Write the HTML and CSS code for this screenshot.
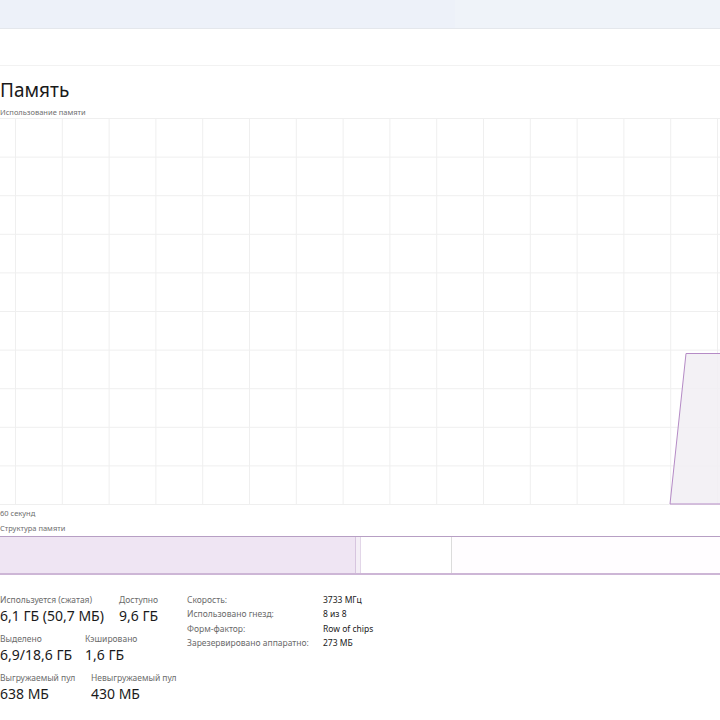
FILE: index.html
```html
<!DOCTYPE html>
<html lang="ru">
<head>
<meta charset="utf-8">
<link rel="stylesheet" href="styles.css">
</head>
<body>
<div class="topbar"><div class="topbar-right"></div></div>
<div class="toolbar"></div>
<main class="panel">
  <h1 class="title">Память</h1>
  <div class="caption caption-usage">Использование памяти</div>
  <svg class="graph" width="720" height="388" viewBox="0 0 720 388">
    <g stroke="#efefef" stroke-width="1">
      <line x1="0" y1="0.5" x2="720" y2="0.5"/>
      <line x1="0" y1="39.1" x2="720" y2="39.1"/>
      <line x1="0" y1="77.7" x2="720" y2="77.7"/>
      <line x1="0" y1="116.3" x2="720" y2="116.3"/>
      <line x1="0" y1="154.9" x2="720" y2="154.9"/>
      <line x1="0" y1="193.5" x2="720" y2="193.5"/>
      <line x1="0" y1="232.1" x2="720" y2="232.1"/>
      <line x1="0" y1="270.7" x2="720" y2="270.7"/>
      <line x1="0" y1="309.3" x2="720" y2="309.3"/>
      <line x1="0" y1="347.9" x2="720" y2="347.9"/>
      <line x1="0" y1="386.5" x2="720" y2="386.5"/>
      <line x1="15.5" y1="0" x2="15.5" y2="387"/>
      <line x1="62.3" y1="0" x2="62.3" y2="387"/>
      <line x1="109.1" y1="0" x2="109.1" y2="387"/>
      <line x1="155.9" y1="0" x2="155.9" y2="387"/>
      <line x1="202.7" y1="0" x2="202.7" y2="387"/>
      <line x1="249.5" y1="0" x2="249.5" y2="387"/>
      <line x1="296.3" y1="0" x2="296.3" y2="387"/>
      <line x1="343.1" y1="0" x2="343.1" y2="387"/>
      <line x1="389.9" y1="0" x2="389.9" y2="387"/>
      <line x1="436.7" y1="0" x2="436.7" y2="387"/>
      <line x1="483.5" y1="0" x2="483.5" y2="387"/>
      <line x1="530.3" y1="0" x2="530.3" y2="387"/>
      <line x1="577.1" y1="0" x2="577.1" y2="387"/>
      <line x1="623.9" y1="0" x2="623.9" y2="387"/>
      <line x1="670.7" y1="0" x2="670.7" y2="387"/>
      <line x1="717.5" y1="0" x2="717.5" y2="387"/>
    </g>
    <polygon points="670,386 686,235.5 724,235.5 724,386" fill="#f1eef3" fill-opacity="0.85" stroke="#b58bc6" stroke-width="1"/>
  </svg>
  <div class="caption caption-time">60 секунд</div>
  <div class="caption caption-struct">Структура памяти</div>
  <div class="composition">
    <div class="seg seg-used"></div>
    <div class="seg seg-modified"></div>
    <div class="seg seg-standby"></div>
    <div class="seg seg-free"></div>
  </div>
  <section class="stats">
    <div class="stats-left">
      <div class="stat-row">
        <div class="stat stat-used">
          <div class="stat-label">Используется (сжатая)</div>
          <div class="stat-value">6,1 ГБ (50,7 МБ)</div>
        </div>
        <div class="stat">
          <div class="stat-label">Доступно</div>
          <div class="stat-value">9,6 ГБ</div>
        </div>
      </div>
      <div class="stat-row">
        <div class="stat stat-committed">
          <div class="stat-label">Выделено</div>
          <div class="stat-value">6,9/18,6 ГБ</div>
        </div>
        <div class="stat">
          <div class="stat-label">Кэшировано</div>
          <div class="stat-value">1,6 ГБ</div>
        </div>
      </div>
      <div class="stat-row">
        <div class="stat stat-paged">
          <div class="stat-label">Выгружаемый пул</div>
          <div class="stat-value">638 МБ</div>
        </div>
        <div class="stat">
          <div class="stat-label">Невыгружаемый пул</div>
          <div class="stat-value">430 МБ</div>
        </div>
      </div>
    </div>
    <dl class="props">
      <dt>Скорость:</dt><dd>3733 МГц</dd>
      <dt>Использовано гнезд:</dt><dd>8 из 8</dd>
      <dt>Форм-фактор:</dt><dd>Row of chips</dd>
      <dt>Зарезервировано аппаратно:</dt><dd>273 МБ</dd>
    </dl>
  </section>
</main>
</body>
</html>
```
FILE: styles.css
```css
html, body {
  margin: 0;
  padding: 0;
  background: #ffffff;
  overflow: hidden;
}
body {
  width: 720px;
  height: 720px;
  font-family: "Noto Sans", "Open Sans", "DejaVu Sans", sans-serif;
  color: #1a1a1a;
}
.topbar {
  height: 28px;
  background: #edf1f9;
  border-bottom: 1px solid #e4e7ec;
  display: flex;
  justify-content: flex-end;
}
.topbar-right {
  width: 265px;
  background: #eff3f9;
}
.toolbar {
  height: 36px;
  border-bottom: 1px solid #f2f2f2;
}
.panel {
  width: 720px;
}
.title {
  margin: 12px 0 0 0;
  font-size: 19px;
  line-height: 24px;
  font-weight: 400;
  color: #1a1a1a;
}
.caption {
  font-size: 7.5px;
  line-height: 10px;
  color: #6e6e6e;
}
.caption-usage {
  margin-top: 5px;
}
.graph {
  display: block;
  margin-top: 1px;
}
.caption-time {
  margin-top: 2px;
}
.caption-struct {
  margin-top: 5px;
}
.composition {
  margin-top: 3px;
  height: 36px;
  display: flex;
  border-top: 1px solid #b79fc4;
  border-bottom: 2px solid #cdb6d6;
}
.seg-used {
  width: 355px;
  background: #efe5f3;
  border-right: 1px solid #d7c5df;
}
.seg-modified {
  width: 4px;
  background: #f4eef6;
  border-right: 1px solid #e2d6e8;
}
.seg-standby {
  width: 90px;
  background: #ffffff;
  border-right: 1px solid #dcdcdc;
}
.seg-free {
  flex: 1;
  background: #fffdff;
}
.stats {
  display: flex;
  align-items: flex-start;
  margin-top: 19px;
}
.stats-left {
  width: 187px;
  display: flex;
  flex-direction: column;
  gap: 7px;
}
.stat-row {
  display: flex;
}
.stat-used { width: 119px; }
.stat-committed { width: 85px; }
.stat-paged { width: 91px; }
.stat-label {
  font-size: 8.5px;
  line-height: 11px;
  margin-bottom: 1px;
  color: #6b6b6b;
}
.stat-value {
  font-size: 14px;
  line-height: 20px;
  color: #1a1a1a;
}
.props {
  margin: 0;
  display: grid;
  grid-template-columns: 136px auto;
  row-gap: 3.4px;
  font-size: 8.5px;
  line-height: 11px;
}
.props dt {
  color: #6b6b6b;
}
.props dd {
  margin: 0;
  color: #1a1a1a;
}
```
